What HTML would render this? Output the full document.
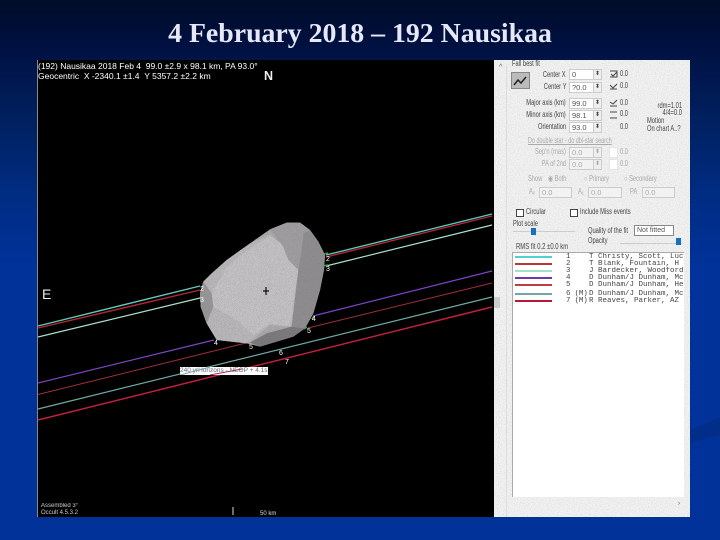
<!DOCTYPE html>
<html><head><meta charset="utf-8"><style>
html,body{margin:0;padding:0}
body{width:720px;height:540px;overflow:hidden;position:relative;background:linear-gradient(180deg,#000c28 0,#001040 8%,#00205f 22%,#002c82 36%,#00329a 50%,#00329a 100%);font-family:"Liberation Sans",sans-serif}
.t{position:absolute;white-space:nowrap}
#title{left:0;width:720px;top:18px;text-align:center;font:bold 27.8px/32px "Liberation Serif",serif;color:#e6e8f8}
#img{position:absolute;left:37px;top:60px;width:457px;height:457px;background:#000;border-left:1px solid #888;box-sizing:border-box}
#panel{position:absolute;left:494px;top:60px;width:196px;height:457px;background:#f3f2f3;overflow:hidden}
.p{position:absolute;white-space:nowrap;font-size:8px;line-height:10px;color:#444;filter:blur(.35px);transform:scaleX(.72);transform-origin:0 50%}
.r{transform-origin:100% 50%}
.g{color:#aaa}
.box{position:absolute;background:#fff;height:11px;box-sizing:border-box;border:1px solid #ccc;font-size:7.5px;line-height:9px;color:#555;padding-left:2px;filter:blur(.3px)}
.gb{background:#f2f2f2;color:#aaa}
.sp{position:absolute;left:99px;width:9px;height:11px;background:#eee;border:1px solid #ccc;box-sizing:border-box;color:#444;font-size:6px;line-height:9px;text-align:center;filter:blur(.3px)}
.cb{position:absolute;width:6px;height:6px;border:1px solid #444;background:#fff}
.m{position:absolute;font:7.5px/9px "Liberation Mono",monospace;color:#444;white-space:nowrap;filter:blur(.3px)}
.l{position:absolute;left:2px;width:37px;height:2px}
.w{color:#fff;font-size:7px;line-height:8px;position:absolute;filter:blur(.3px)}
</style></head><body>
<svg style="position:absolute;left:690px;top:410px" width="30" height="40"><path d="M0 20L30 8V25L0 33Z" fill="#022d88"/></svg>
<div class="t" id="title">4 February 2018 – 192 Nausikaa</div>
<div id="img"></div>
<svg style="position:absolute;left:37px;top:60px" width="457" height="457" viewBox="37 60 457 457">
<defs>
<filter id="n" x="0" y="0" width="100%" height="100%"><feTurbulence type="fractalNoise" baseFrequency=".8" numOctaves="2" seed="3" result="t"/><feColorMatrix in="t" type="matrix" values="0 0 0 0 0.2  0 0 0 0 0.2  0 0 0 0 0.2  1.2 0 0 0 -.45" result="a"/><feComposite in="a" in2="SourceGraphic" operator="in" result="b"/><feMerge><feMergeNode in="SourceGraphic"/><feMergeNode in="b"/></feMerge></filter>
</defs>
<g fill="none">
<path d="M38 326L200 286" stroke="#5fc8c0" stroke-width="1.4"/>
<path d="M38 328L200 290" stroke="#b02a30" stroke-width="1.4"/>
<path d="M38 337L200 298" stroke="#a8e0c8" stroke-width="1.2"/>
<path d="M326 255L492 214" stroke="#5fc8c0" stroke-width="1.4"/>
<path d="M326 257L492 216" stroke="#b02a30" stroke-width="1.4"/>
<path d="M326 266L492 225" stroke="#a8e0c8" stroke-width="1.2"/>
<path d="M38 383L214 340" stroke="#7a45c0" stroke-width="1.2"/>
<path d="M313 316L492 271" stroke="#7a45c0" stroke-width="1.2"/>
<path d="M38 394.500L250 342" stroke="#a03034" stroke-width="1"/>
<path d="M308 328L492 283" stroke="#a03034" stroke-width="1"/>
<path d="M38 409L492 297" stroke="#70a8a4" stroke-width="1.2"/>
<path d="M38 420L492 307" stroke="#c0203c" stroke-width="1.5"/>
</g>
<g transform="translate(170 210) scale(.33333)" filter="url(#n)">
<polygon points="100,215 125,190 170,150 240,100 300,58 350,38 390,38 420,60 445,95 465,135 462,180 450,240 430,310 405,355 370,380 320,395 270,410 230,400 140,390 110,340 92,290 90,250" fill="#aeacae"/>
<polygon points="100,215 125,190 170,150 240,100 300,72 340,110 355,150 385,180 365,350 300,345 240,395 230,400 140,390 110,340 92,290 90,250" fill="#bdbbbd"/>
<polygon points="125,250 130,290 200,330 250,375 300,340 360,350 385,180 355,150 335,100 300,78 240,115 170,170" fill="#c8c6c8"/>
<polygon points="300,58 350,38 390,38 420,60 400,70 395,120 385,180 355,150 340,110" fill="#a2a0a2"/>
<polygon points="420,60 445,95 465,135 462,180 450,240 430,310 405,355 365,350 385,180 395,120 400,70" fill="#908e90"/>
<polygon points="365,350 405,355 370,380 320,395 270,410 240,398 290,370" fill="#7a787a"/>
<polygon points="100,215 125,250 130,290 110,340 92,290 90,250" fill="#9a989a"/>
</g>
<path d="M263 291h6M266 287v8" stroke="#111" stroke-width="1.200"/>
<path d="M324 254l4-1M323 266l5-1M314 316l-2 3M307 327l-3 2" stroke="#4c9a50" stroke-width="1.500"/>
<path d="M233 507v8" stroke="#ddd" stroke-width="1"/>
</svg>
<div class="w" style="left:326px;top:256px">2</div>
<div class="w" style="left:326px;top:266px">3</div>
<div class="w" style="left:200px;top:286px">2</div>
<div class="w" style="left:200px;top:297px">3</div>
<div class="w" style="left:312px;top:316px">4</div>
<div class="w" style="left:307px;top:328px">5</div>
<div class="w" style="left:214px;top:340px">4</div>
<div class="w" style="left:249px;top:344px">5</div>
<div class="w" style="left:279px;top:350px">6</div>
<div class="w" style="left:285px;top:359px">7</div>
<div class="t" style="left:180px;top:367px;width:88px;height:8px;background:#fff;color:#667;font-size:6.5px;line-height:8px;overflow:hidden;filter:blur(.3px)">240 yrHorizons - NEOP + 4.1s</div>
<svg style="position:absolute;left:180px;top:367px" width="88" height="8"><path d="M0 8L30 0" stroke="#70a8a4"/><path d="M30 8L62 2" stroke="#a03058"/></svg>
<div class="t" style="left:38px;top:62px;color:#fff;font-size:8.5px;line-height:9.5px;filter:blur(.25px)">(192) Nausikaa 2018 Feb 4 &nbsp;99.0 ±2.9 x 98.1 km, PA 93.0°<br>Geocentric &nbsp;X -2340.1 ±1.4 &nbsp;Y 5357.2 ±2.2 km</div>
<div class="t" style="left:264px;top:69px;color:#eee;font-size:12.500px;line-height:14px;font-weight:bold">N</div>
<div class="t" style="left:42px;top:287px;color:#eee;font-size:14px;line-height:15px">E</div>
<div class="t" style="left:41px;top:503px;color:#ccc;font-size:6px;line-height:7px;filter:blur(.3px)">Assembled 3°<br>Occult 4.5.3.2</div>
<div class="t" style="left:260px;top:511px;color:#ddd;font-size:6px;line-height:7px">50 km</div>

<div id="panel">
<svg style="position:absolute;left:0;top:0" width="196" height="457"><defs><filter id="pn" x="0" y="0" width="100%" height="100%"><feTurbulence type="fractalNoise" baseFrequency=".9" numOctaves="2" seed="8"/><feColorMatrix type="matrix" values="0 0 0 0 .6  0 0 0 0 .6  0 0 0 0 .6  1.4 0 0 0 -.6"/></filter></defs><rect width="196" height="457" filter="url(#pn)"/></svg>
<div style="position:absolute;left:12px;top:5px;width:184px;height:452px;border-left:1px solid #ddd;box-sizing:border-box"></div>
<div class="p" style="left:18px;top:-1px">Fall best fit</div>
<div style="position:absolute;left:5px;top:4px;font-size:7px;line-height:8px;color:#666">^</div>
<div style="position:absolute;left:17px;top:12px;width:19px;height:17px;background:#bbb;border:1px solid #888;box-sizing:border-box"><svg width="17" height="15" style="display:block"><path d="M2 12L6 7L9 10L14 4" stroke="#222" stroke-width="1.500" fill="none"/></svg></div>

<div class="p r" style="right:124px;top:10px">Center X</div><div class="box" style="left:75px;top:9px;width:33px">0</div><div class="sp" style="top:9px">⬍</div>
<div class="p r" style="right:124px;top:22px">Center Y</div><div class="box" style="left:75px;top:22px;width:33px">?0.0</div><div class="sp" style="top:22px">⬍</div>
<div class="p r" style="right:124px;top:38px">Major axis (km)</div><div class="box" style="left:75px;top:38px;width:33px">99.0</div><div class="sp" style="top:38px">⬍</div>
<div class="p r" style="right:124px;top:50px">Minor axis (km)</div><div class="box" style="left:75px;top:50px;width:33px">98.1</div><div class="sp" style="top:50px">⬍</div>
<div class="p r" style="right:124px;top:62px">Orientation</div><div class="box" style="left:75px;top:62px;width:33px">93.0</div><div class="sp" style="top:62px">⬍</div>
<svg style="position:absolute;left:115px;top:10px" width="10" height="60" fill="none" stroke="#444"><path d="M1 1H8V7H1M2 4L4 6L8 2M1 15L4 18L8 14M1 19H8M1 32L4 34L8 30M1 36H8M1 42H8M1 48H8" /></svg>
<div class="p" style="left:126px;top:9px">0.0</div>
<div class="p" style="left:126px;top:21px">0.0</div>
<div class="p" style="left:126px;top:38px">0.0</div>
<div class="p" style="left:126px;top:49px">0.0</div>
<div class="p" style="left:126px;top:62px">0.0</div>
<div class="p r" style="right:8px;top:41px">rdm=1.01</div>
<div class="p r" style="right:8px;top:48px">4/4=0.0</div>
<div class="p" style="left:153px;top:57px;line-height:8px">Motion<br>On chart A..?</div>

<div class="p g" style="left:34px;top:76px;text-decoration:underline;transform:scaleX(.68)">Do double star - do dbl-star search</div>
<div class="p g r" style="right:124px;top:87px">Sep'n (mas)</div><div class="box gb" style="left:75px;top:87px;width:33px">0.0</div>
<div class="p g r" style="right:124px;top:99px">PA of 2nd</div><div class="box gb" style="left:75px;top:99px;width:33px">0.0</div>
<div class="sp" style="top:87px;color:#aaa">⬍</div><div class="sp" style="top:99px;color:#aaa">⬍</div>
<div class="box" style="left:115px;top:87px;width:9px;border-color:#e4e4e4"></div>
<div class="box" style="left:115px;top:99px;width:9px;border-color:#e4e4e4"></div>
<div class="p g" style="left:126px;top:87px">0.0</div>
<div class="p g" style="left:126px;top:99px">0.0</div>
<div class="p g" style="left:34px;top:114px">Show</div><div class="p g" style="left:54px;top:114px">◉ Both</div><div class="p g" style="left:90px;top:114px">○ Primary</div><div class="p g" style="left:130px;top:114px">○ Secondary</div>
<div class="p g" style="left:35px;top:127px">A₀</div><div class="box gb" style="left:45px;top:127px;width:33px">0.0</div>
<div class="p g" style="left:84px;top:127px">A₁</div><div class="box gb" style="left:94px;top:127px;width:34px">0.0</div>
<div class="p g" style="left:136px;top:127px">PA</div><div class="box gb" style="left:148px;top:127px;width:33px">0.0</div>

<div class="cb" style="left:22px;top:149px"></div><div class="p" style="left:32px;top:147px">Circular</div>
<div class="cb" style="left:76px;top:149px"></div><div class="p" style="left:86px;top:147px">Include Miss events</div>
<div class="p" style="left:19px;top:159px">Plot scale</div>
<div style="position:absolute;left:19px;top:171px;width:62px;height:1px;background:#ccc"></div>
<div style="position:absolute;left:37px;top:168px;width:5px;height:7px;background:#1a70c0"></div>
<div class="p" style="left:94px;top:166px">Quality of the fit</div>
<div class="box" style="left:140px;top:165px;width:40px;border-color:#888;overflow:hidden;font-size:7px">Not fitted</div>
<div class="p" style="left:94px;top:176px">Opacity</div>
<div style="position:absolute;left:126px;top:183px;width:62px;height:1px;background:#ccc"></div>
<div style="position:absolute;left:182px;top:178px;width:5px;height:7px;background:#1a70c0"></div>
<div class="p" style="left:22px;top:181px;font-size:8.500px;transform:scaleX(.7)">RMS fit 0.2 ±0.0 km</div>

<div style="position:absolute;left:18px;top:192px;width:172px;height:245px;background:#fff;border:1px solid #aaa;border-width:1px 0 0 1px;box-sizing:border-box;overflow:hidden">
<div class="l" style="top:3px;background:#50d0d0"></div>
<div class="l" style="top:10px;background:#b83838"></div>
<div class="l" style="top:17px;background:#a0e0cc"></div>
<div class="l" style="top:24px;background:#7038a8"></div>
<div class="l" style="top:31px;background:#b84040"></div>
<div class="l" style="top:40px;background:#70a8a8"></div>
<div class="l" style="top:47px;background:#b81838"></div>
<div class="m" style="left:53px;top:0">1</div><div class="m" style="left:76px;top:0">T Christy, Scott, Lucas, R</div>
<div class="m" style="left:53px;top:7px">2</div><div class="m" style="left:76px;top:7px">T Blank, Fountain, H T</div>
<div class="m" style="left:53px;top:14px">3</div><div class="m" style="left:76px;top:14px">J Bardecker, Woodford</div>
<div class="m" style="left:53px;top:21px">4</div><div class="m" style="left:76px;top:21px">D Dunham/J Dunham, Mc</div>
<div class="m" style="left:53px;top:28px">5</div><div class="m" style="left:76px;top:28px">D Dunham/J Dunham, He</div>
<div class="m" style="left:53px;top:37px;letter-spacing:-.2px">6 (M)</div><div class="m" style="left:76px;top:37px">D Dunham/J Dunham, Mc</div>
<div class="m" style="left:53px;top:44px;letter-spacing:-.2px">7 (M)</div><div class="m" style="left:76px;top:44px">R Reaves, Parker, AZ</div>
</div>
<div style="position:absolute;left:0;top:237px;width:6px;height:11px;background:#ccc"></div>
<div style="position:absolute;left:184px;top:441px;font-size:6px;line-height:7px;color:#444">›</div>
</div>
</body></html>
